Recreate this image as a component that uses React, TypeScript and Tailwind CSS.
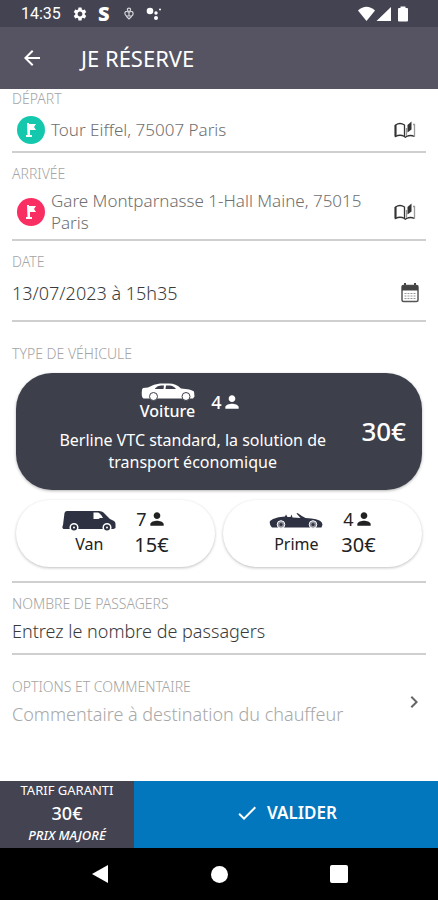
import React, { useState } from 'react'
import { MdArrowBack, MdCheck, MdChevronRight, MdPerson, MdSettings } from 'react-icons/md'

const StatusBar = () => {
  return (
    <div className="flex h-[27px] items-center justify-between bg-[#444352] pr-[29px] pl-[21px] text-white">
      <div className="flex items-center">
        <span className="w-10 font-[Roboto] text-base">14:35</span>
        <MdSettings className="ml-[11px] size-4" />
        <span className="ml-[10px] w-[14px] font-['Open_Sans'] text-xl leading-6 font-extrabold">S</span>
        <svg className="ml-3 h-[13px] w-[10px]" viewBox="0 0 11 14" fill="none" stroke="#d6d6dc" strokeWidth="1.3">
          <circle cx="5.5" cy="2.8" r="1.8" />
          <path d="M5.500 5.500q-5-2-4.500 1.500t4.500 2.500q4.500 1 4.500-2.500t-4.500-1.500v4.500" />
          <path d="M2.500 10l3 3 3-3" />
        </svg>
        <svg className="ml-3 h-[14px] w-4" viewBox="0 0 16 14" fill="currentColor">
          <circle cx="4" cy="4" r="3.3" />
          <circle cx="10" cy="6" r="1.7" />
          <circle cx="10" cy="11" r="2" />
          <circle cx="14" cy="2.5" r="1" />
        </svg>
      </div>
      <svg className="h-4 w-[51px]" viewBox="0 0 51 16" fill="currentColor">
        <path d="M0 4.500Q8.500-3 17 4.500L8.500 15z" />
        <path d="M33 1v14H18.500z" />
        <path d="M42.500.5h5V2H49q1 0 1 1v11.500q0 1-1 1h-8q-1 0-1-1V3q0-1 1-1h1.500z" />
      </svg>
    </div>
  )
}

const FlagBadge = ({ className }: { className: string }) => {
  return (
    <span className={`flex size-7 shrink-0 items-center justify-center rounded-full ${className}`}>
      <svg className="size-4" viewBox="0 0 16 16" fill="white">
        <path d="M4 1h2v1h7l-2 3 2 3H7v5h2v2H3v-2h1.500z" />
      </svg>
    </span>
  )
}

const BookIcon = () => {
  return (
    <svg className="h-[18px] w-[22px]" viewBox="0 0 22 18" fill="none" stroke="#333" strokeWidth="1.300">
      <path d="M1.500 15.500V4q4.500-3 9 0v11.500q-4.500-2.500-9 0z" />
      <path d="M1.500 4v11.500" strokeWidth="2" />
      <path d="M10.500 15.500q1 1.500 2 0 4-2 8 0" />
      <path d="M12.500 7v8M20.500 15.500V3.500H19" stroke="#999" />
      <path d="M13.500 4l4-3.500v8l-4 3z" fill="#333" stroke="none" />
    </svg>
  )
}

const CalendarIcon = () => {
  return (
    <svg className="h-5 w-[18px]" viewBox="0 0 18 20">
      <path d="M3 0h2v3H3zM13 0h2v3h-2z" fill="#444" />
      <rect x="1" y="2.500" width="16" height="16" rx="1.500" fill="white" stroke="#555" strokeWidth="1.500" />
      <path d="M1 2.500h16v5H1z" fill="#444" />
      <path d="M3.500 10.500h11M3.500 13h11M3.500 15.500h11" stroke="#999" strokeDasharray="2 1" />
    </svg>
  )
}

const SedanIcon = () => {
  return (
    <svg className="h-[18px] w-[54px]" viewBox="0 0 54 18">
      <path d="M1 6.500L2 5l5-.5Q13 1 19 .5h9q7 0 12 5 10 .5 13 3l.5 5-1.500 2H2.500Q0 14 1 6.500z" fill="white" />
      <path d="M14 5.500q2.500-3 6-3h3L22.500 6H14zM25 2.500h3.500q4 0 6.500 3.500H24.500z" fill="#3d404b" />
      <g fill="white" stroke="#3d404b">
        <circle cx="12.500" cy="13.500" r="4" />
        <circle cx="45" cy="13.500" r="4" />
      </g>
    </svg>
  )
}

const VanIcon = () => {
  return (
    <svg className="h-[22px] w-[54px]" viewBox="0 0 54 22">
      <path d="M5 1h32q3 0 4.500 1.500L48 9l4 2q1.500 1 1.500 3v4l-2 1H1.500q-2-1-.5-4L2.500 3q.5-2 2.500-2z" fill="#2e3142" />
      <path d="M31.500 2.500h4q2.500 0 5.500 5.500h-3l-1.500 1h-5z" fill="white" />
      <g fill="#2e3142" stroke="white" strokeWidth="1.500">
        <circle cx="12" cy="17.500" r="3.800" />
        <circle cx="45" cy="17.500" r="3.800" />
      </g>
      <circle cx="12" cy="17.500" r="1" fill="white" />
      <circle cx="45" cy="17.500" r="1" fill="white" />
    </svg>
  )
}

const CabrioletIcon = () => {
  return (
    <svg className="h-4 w-[54px]" viewBox="0 0 54 16">
      <path d="M1 8l3-2q5-2.500 12-2.500l1-2 1.500 2.500h3l1-2.500 1 3 8 .5-4-4.500 1-.5q4 3 8 5 13 .5 16 4l1 2.500-1 3H3q-3-3-2-7z" fill="#2e3142" />
      <g fill="#8c8e99" stroke="white">
        <circle cx="12" cy="11.500" r="3.800" />
        <circle cx="44" cy="11.500" r="3.800" />
      </g>
      <circle cx="12" cy="11.500" r="1.500" fill="#2e3142" />
      <circle cx="44" cy="11.500" r="1.500" fill="#2e3142" />
    </svg>
  )
}

const Seats = ({ count }: { count: number }) => {
  return (
    <span className="flex items-center text-lg leading-5">
      {count}
      <MdPerson className="size-5" />
    </span>
  )
}

type VehicleProps = {
  name: string
  seats: number
  price: string
  icon: React.ReactNode
  checked: boolean
  onSelect: () => void
}

const SmallVehicle = ({ name, seats, price, icon, checked, onSelect }: VehicleProps) => {
  return (
    <label className="flex h-[67px] flex-1 cursor-pointer justify-center gap-[18px] rounded-full bg-white pt-2 text-[#222] shadow-[0_1px_3px_rgba(0,0,0,0.25)]">
      <input type="radio" name="vehicle" className="sr-only" checked={checked} onChange={onSelect} />
      <span className="flex flex-col items-center">
        <span className="flex h-[26px] items-center">{icon}</span>
        <span className="text-base leading-5">{name}</span>
      </span>
      <span className="flex flex-col items-center pt-px">
        <Seats count={seats} />
        <span className="text-xl leading-8">{price}</span>
      </span>
    </label>
  )
}

const labelClass = 'block text-sm leading-5 font-light text-[#a4a4a4]'

const App = () => {
  const [vehicle, setVehicle] = useState('voiture')
  const [date, setDate] = useState('13/07/2023 à 15h35')

  return (
    <div className="flex min-h-screen flex-col bg-white font-['Noto_Sans',sans-serif]">
      <StatusBar />
      <header className="flex h-[62px] items-center gap-[37px] bg-[#565463] pl-5 text-white">
        <button aria-label="Retour">
          <MdArrowBack className="size-6" />
        </button>
        <h1 className="text-[22px]">JE RÉSERVE</h1>
      </header>

      <main className="flex-1 px-3">
        <section className="border-b-2 border-[#cfcfcf] pb-[7px]">
          <span id="depart" className={labelClass}>DÉPART</span>
          <div className="flex items-center pt-[7px] pr-[10px] pl-[5px]">
            <FlagBadge className="bg-[#14c8ae]" />
            <button aria-describedby="depart" className="mr-3 ml-[6px] flex-1 text-left text-[17px] leading-[22px] font-light text-[#707070]">
              Tour Eiffel, 75007 Paris
            </button>
            <button aria-label="Carnet d'adresses">
              <BookIcon />
            </button>
          </div>
        </section>

        <section className="border-b-2 border-[#cfcfcf] pt-[11px] pb-[5px]">
          <span id="arrivee" className={labelClass}>ARRIVÉE</span>
          <div className="flex items-center pt-[6px] pr-[10px] pl-[5px]">
            <FlagBadge className="bg-[#f92f64]" />
            <button aria-describedby="arrivee" className="mr-3 ml-[6px] flex-1 text-left text-[17px] leading-[22px] font-light text-[#707070]">
              Gare Montparnasse 1-Hall Maine, 75015 Paris
            </button>
            <button aria-label="Carnet d'adresses">
              <BookIcon />
            </button>
          </div>
        </section>

        <section className="border-b-2 border-[#cfcfcf] pt-[11px] pb-[15px]">
          <label htmlFor="date" className={labelClass}>DATE</label>
          <div className="flex items-center pt-[9px] pr-[7px]">
            <input
              id="date"
              className="min-w-0 flex-1 text-lg leading-6 font-light text-[#3a3a3a]"
              value={date}
              onChange={(e) => setDate(e.target.value)}
            />
            <button aria-label="Choisir la date">
              <CalendarIcon />
            </button>
          </div>
        </section>

        <div role="radiogroup" aria-labelledby="type" className="border-b-2 border-[#cfcfcf] pt-[22px] pb-[14px]">
          <span id="type" className={labelClass}>TYPE DE VÉHICULE</span>
          <label className="mx-1 mt-[9px] flex h-[117px] cursor-pointer items-center rounded-[36px] bg-[#3d404b] pr-4 pl-8 text-white shadow-[0_1px_3px_rgba(0,0,0,0.3)]">
            <input
              type="radio"
              name="vehicle"
              className="sr-only"
              checked={vehicle === 'voiture'}
              onChange={() => setVehicle('voiture')}
            />
            <span className="flex flex-1 flex-col items-center pb-2">
              <span className="flex items-center gap-4 pr-1 font-medium">
                <span className="flex flex-col items-center">
                  <SedanIcon />
                  <span className="text-base leading-5">Voiture</span>
                </span>
                <Seats count={4} />
              </span>
              <span className="mt-2 text-center text-base leading-[22px]">
                Berline VTC standard, la solution de transport économique
              </span>
            </span>
            <span className="ml-6 text-[26px] font-medium">30€</span>
          </label>

          <div className="mx-1 mt-[10px] flex gap-2">
            <SmallVehicle
              name="Van"
              seats={7}
              price="15€"
              icon={<VanIcon />}
              checked={vehicle === 'van'}
              onSelect={() => setVehicle('van')}
            />
            <SmallVehicle
              name="Prime"
              seats={4}
              price="30€"
              icon={<CabrioletIcon />}
              checked={vehicle === 'prime'}
              onSelect={() => setVehicle('prime')}
            />
          </div>
        </div>

        <section className="border-b-2 border-[#cfcfcf] pt-[11px] pb-[10px]">
          <label htmlFor="passagers" className={labelClass}>NOMBRE DE PASSAGERS</label>
          <input
            id="passagers"
            inputMode="numeric"
            className="mt-[5px] block w-full text-lg leading-6 font-light text-[#3a3a3a] placeholder:text-[#3a3a3a]"
            placeholder="Entrez le nombre de passagers"
          />
        </section>

        <section className="flex items-center pt-[22px]">
          <div className="flex-1">
            <label htmlFor="commentaire" className={labelClass}>OPTIONS ET COMMENTAIRE</label>
            <input
              id="commentaire"
              className="mt-[5px] block w-full text-lg leading-6 font-light text-[#3a3a3a] placeholder:text-[#a8a8a8]"
              placeholder="Commentaire à destination du chauffeur"
            />
          </div>
          <button aria-label="Voir les options" className="text-[#666]">
            <MdChevronRight className="size-6" />
          </button>
        </section>
      </main>

      <footer>
        <div className="flex h-[67px] text-white">
          <div className="flex w-[134px] flex-col items-center bg-[#444352] text-[13px] leading-[18px]">
            <span>TARIF GARANTI</span>
            <span className="text-lg leading-7 font-medium">30€</span>
            <span className="leading-4 font-medium italic">PRIX MAJORÉ</span>
          </div>
          <button className="flex flex-1 items-center justify-center gap-2 bg-[#0277bd] pb-1 text-[17px] font-semibold">
            <MdCheck className="size-6" />
            VALIDER
          </button>
        </div>
        <nav className="flex h-[52px] items-center justify-center gap-[102px] bg-black text-white">
          <button aria-label="Précédent">
            <svg className="size-[18px]" viewBox="0 0 18 18" fill="currentColor">
              <path d="M17 0v18L1 9z" />
            </svg>
          </button>
          <button aria-label="Accueil" className="size-[17px] rounded-full bg-white" />
          <button aria-label="Applications récentes" className="size-[18px] rounded-xs bg-white" />
        </nav>
      </footer>
    </div>
  )
}

export default App
